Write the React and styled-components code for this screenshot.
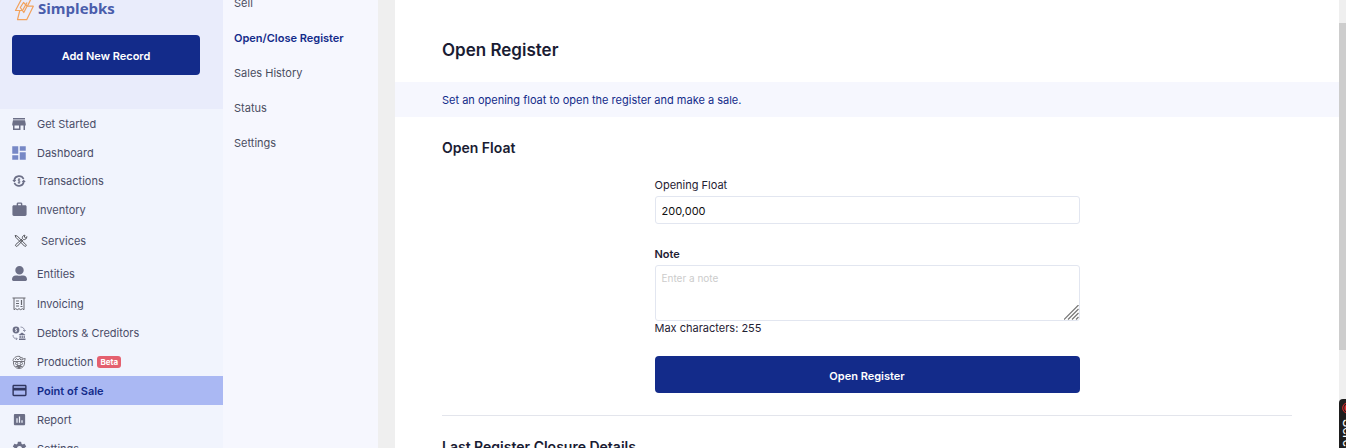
import React from "react";
import styled, { createGlobalStyle, css } from "styled-components";
import { MdStore, MdDashboard, MdWork, MdCreditCard, MdAssessment, MdSettings } from "react-icons/md";
import { FaUserAlt } from "react-icons/fa";

const GlobalStyle = createGlobalStyle`
  *, *::before, *::after { box-sizing: border-box; }
  body { margin: 0; background: #efefef; overflow: hidden; }
  body, button, input, textarea { font-family: Inter, "Liberation Sans", sans-serif; }
  h1, h2, p, ul { margin: 0; padding: 0; }
  ul { list-style: none; }
`;

const Shell = styled.div`
  position: relative;
  display: flex;
  height: 100vh;
  overflow: hidden;
  font-size: 11px;
  line-height: 16px;
  color: #3f4254;
`;

const Sidebar = styled.nav`
  flex: none;
  width: 223px;
  background: #f1f4fd;
`;

const SidebarTop = styled.div`
  height: 109px;
  padding: 0 23px 0 12px;
  background: #e9ecfb;
`;

const Brand = styled.a`
  display: flex;
  align-items: flex-start;
  gap: 4px;
  height: 35px;
  padding-left: 2px;
  color: #4a5dab;
  font: 700 15px/16px "Open Sans", "Noto Sans", sans-serif;
  text-decoration: none;
`;

const SolidButton = styled.button`
  display: block;
  width: 100%;
  height: ${(p) => p.$height}px;
  padding: 2px 6px 0;
  border: 0;
  border-radius: 4px;
  background: #132b8a;
  color: #fff;
  font-size: 11px;
  font-weight: 600;
`;

const NavLink = styled.a`
  display: flex;
  align-items: center;
  gap: 11px;
  height: ${(p) => p.$height || 29}px;
  padding-left: 12px;
  color: #4a4d68;
  text-decoration: none;
  ${(p) => p.$inset && css`gap: 13px; padding-left: 14px;`}
  ${(p) => p.$active && css`background: #aab8f3; color: #132b8a; font-weight: 600;`}
`;

const IconSlot = styled.span`
  flex: none;
  display: flex;
  align-items: center;
  justify-content: center;
  width: 14px;
  height: 16px;
  color: ${(p) => p.$color || "#6c6f87"};
  svg { flex: none; }
`;

const NavText = styled.span`
  display: flex;
  align-items: center;
  gap: 4px;
`;

const Badge = styled.span`
  padding: 0 3px;
  border-radius: 3px;
  background: #e4606f;
  color: #fff;
  font-size: 8px;
  font-weight: 700;
  line-height: 12px;
`;

const SubNav = styled.nav`
  flex: none;
  width: 155px;
  margin-right: 17px;
  background: #f6f7fe;
`;

const SubList = styled.ul`
  margin-top: -14px;
`;

const SubLink = styled.a`
  display: block;
  padding-left: 11px;
  line-height: 35px;
  color: ${(p) => (p.$active ? "#132b8a" : "#4a4d5e")};
  font-weight: ${(p) => (p.$active ? 600 : 400)};
  text-decoration: none;
`;

const Main = styled.main`
  flex: 1;
  min-width: 0;
  background: #fff;
`;

const PageTitle = styled.h1`
  padding: 38px 47px 20px;
  color: #1a1c33;
  font-size: 17px;
  font-weight: 600;
  line-height: 24px;
`;

const Notice = styled.p`
  padding: 2px 47px 0;
  background: #f6f7fe;
  color: #132b8a;
  line-height: 33px;
`;

const SectionTitle = styled.h2`
  color: #1a1c33;
  font-size: 14px;
  font-weight: 600;
  line-height: 20px;
`;

const Section = styled.section`
  margin: 0 47px;
  padding-top: 21px;
`;

const Form = styled.form`
  display: flex;
  flex-direction: column;
  width: 50%;
  margin: 0 auto;
  padding: 19px 0 22px;
`;

const Label = styled.label`
  padding-bottom: 3px;
  color: #1f2133;
  font-weight: ${(p) => (p.$strong ? 600 : 400)};
`;

const field = css`
  width: 100%;
  padding: 2px 6px 0;
  border: 1px solid #e2e6f0;
  border-radius: 3px;
  background: #fff;
  color: #111;
  font-size: 11px;
  outline: 0;
  &::placeholder { color: #ccc; opacity: 1; }
`;

const TextInput = styled.input`
  ${field}
  height: 28px;
  margin-bottom: 22px;
`;

const NoteBox = styled.div`
  position: relative;
  display: flex;
`;

const TextArea = styled.textarea`
  ${field}
  height: 56px;
  padding-top: 4px;
  font-size: 10px;
  line-height: 16px;
  resize: none;
`;

const Grip = styled.svg`
  position: absolute;
  right: 1px;
  bottom: 1px;
`;

const Hint = styled.p`
  padding-bottom: 21px;
  color: #1f2133;
  line-height: 14px;
`;

const NextSection = styled(Section)`
  border-top: 1px solid #e3e5ec;
`;

const ScrollTrack = styled.div`
  flex: none;
  width: 7px;
  padding-top: 23px;
  background: #efefef;
`;

const ScrollThumb = styled.div`
  height: 327px;
  background: #cdcdcd;
`;

const Recorder = styled.button`
  position: absolute;
  right: -17px;
  bottom: -91px;
  display: flex;
  flex-direction: column;
  align-items: flex-start;
  justify-content: flex-start;
  gap: 5px;
  width: 24px;
  height: 140px;
  padding: 3px;
  border: 0;
  border-radius: 4px 0 0 4px;
  background: #1e1e1e;
  color: #fff;
  font-size: 13px;
  line-height: 12px;
`;

const RecorderText = styled.span`
  writing-mode: vertical-rl;
  white-space: nowrap;
`;

const LogoMark = () => (
  <svg width="20" height="21" viewBox="0 0 20 21" fill="none" stroke="#f2a25c" strokeWidth="1.2" strokeLinejoin="round" aria-hidden="true">
    <path d="M7.500 -1L1.500 10.500H8.500L13 2.500" />
    <path d="M5.800 10.500L3.500 19.700H12.700L19.300 6.200H13L9.800 12.500L6.300 7.500L9.500 2.500L13.500 6.500" />
    <path d="M17 -1L13.500 6" />
  </svg>
);

const TransferIcon = () => (
  <svg width="14" height="14" viewBox="0 0 14 14" fill="none" stroke="currentColor" aria-hidden="true">
    <path d="M2.200 6A5 5 0 0 1 11.600 5M11.800 8A5 5 0 0 1 2.400 9" strokeWidth="1.700" />
    <path d="M.3 6h4L2.300 8.500zM9.700 8h4L11.700 5.500z" fill="currentColor" stroke="none" />
    <path d="M7 4v6M8.200 5.300H6.300v1.600h1.500v1.700H5.800" strokeWidth=".9" />
  </svg>
);

const ToolsIcon = () => (
  <svg width="14" height="14" viewBox="0 0 14 14" fill="none" stroke="currentColor" strokeLinecap="round" aria-hidden="true">
    <path d="M1.500 1.500l1.800.6 8.700 8.700a1 1 0 0 1-1.400 1.400L2 3.500z" strokeWidth="1" />
    <path d="M12.800 3a2.500 2.500 0 0 1-3.300 2.500L3.500 12a1 1 0 0 1-1.700-1.500L8.500 4.600A2.500 2.500 0 0 1 11 1.200L10.300 3l.8.800z" strokeWidth="1" />
  </svg>
);

const InvoiceIcon = () => (
  <svg width="14" height="14" viewBox="0 0 14 14" fill="none" stroke="currentColor" aria-hidden="true">
    <path d="M.5 1h13M2 1v11.700l1.700-1 1.600 1 1.700-1 1.700 1 1.600-1 1.700 1V1" />
    <path d="M4 4h3M4 6.500h3M4 9h3M9.500 3v5M8.500 9.500h2" strokeWidth="1.200" />
  </svg>
);

const DebtorIcon = () => (
  <svg width="14" height="14" viewBox="0 0 14 14" fill="none" stroke="currentColor" aria-hidden="true">
    <circle cx="4" cy="4" r="3.400" fill="currentColor" stroke="none" />
    <path d="M5 2.700H3.500V4h1v1.300H3" stroke="#f1f4fd" strokeWidth=".8" />
    <path d="M8.500 1c2.500 0 4 1.500 4 4M11 4l1.500 1.500L13.700 4M1 9c0 2.500 1.500 4 4 4M4 11.500L5.300 13 4 14" strokeWidth=".7" />
    <path d="M6.500 9L10 6.500 13.500 9zM7 12.500h6.500V14H7zM7.500 9.500h1.300v2.500H7.500zM9.600 9.500h1.200v2.500H9.600zM11.600 9.500h1.200v2.500h-1.200z" fill="currentColor" stroke="none" />
  </svg>
);

const ProductionIcon = () => (
  <svg width="14" height="14" viewBox="0 0 14 14" fill="none" stroke="currentColor" strokeWidth=".9" aria-hidden="true">
    <path d="M1 5.500C2 2 5 .8 8 1.500l.5 1.600 1.700-.6 1 1.500 2-.5-.7 3H1.500z" />
    <path d="M3 5l1.500-1.500L6 5l1.500-1.500L9 5l2-.5" />
    <path d="M1.500 6.500c-.5 4 2 7 5.500 7s6-3 5.500-7" />
    <circle cx="4.700" cy="8.500" r="1.200" />
    <circle cx="9.300" cy="8.500" r="1.200" />
    <path d="M3.500 11.500h7M5 10.500h4M5.500 12.500h3" />
  </svg>
);

const navItems = [
  { text: "Get Started", icon: <MdStore size={18} /> },
  { text: "Dashboard", icon: <MdDashboard size={18} />, color: "#7788c6" },
  { text: "Transactions", icon: <TransferIcon />, height: 28 },
  { text: "Inventory", icon: <MdWork size={17} /> },
  { text: "Services", icon: <ToolsIcon />, color: "#55565c", height: 33, inset: true },
  { text: "Entities", icon: <FaUserAlt size={15} />, height: 33 },
  { text: "Invoicing", icon: <InvoiceIcon />, color: "#66676e", height: 28 },
  { text: "Debtors & Creditors", icon: <DebtorIcon /> },
  { text: "Production", icon: <ProductionIcon />, color: "#66676e", badge: "Beta" },
  { text: "Point of Sale", icon: <MdCreditCard size={17} />, color: "#30365f", active: true },
  { text: "Report", icon: <MdAssessment size={15} /> },
  { text: "Settings", icon: <MdSettings size={17} /> },
];

const subItems = ["Sell", "Open/Close Register", "Sales History", "Status", "Settings"];

export default function App() {
  return (
    <>
      <GlobalStyle />
      <Shell>
        <Sidebar>
          <SidebarTop>
            <Brand href="#"><LogoMark />Simplebks</Brand>
            <SolidButton type="button" $height={40}>Add New Record</SolidButton>
          </SidebarTop>
          <ul>
            {navItems.map((n) => (
              <li key={n.text}>
                <NavLink href="#" $height={n.height} $inset={n.inset} $active={n.active}>
                  <IconSlot $color={n.color}>{n.icon}</IconSlot>
                  <NavText>{n.text}{n.badge && <Badge>{n.badge}</Badge>}</NavText>
                </NavLink>
              </li>
            ))}
          </ul>
        </Sidebar>
        <SubNav>
          <SubList>
            {subItems.map((s) => (
              <li key={s}><SubLink href="#" $active={s === "Open/Close Register"}>{s}</SubLink></li>
            ))}
          </SubList>
        </SubNav>
        <Main>
          <PageTitle>Open Register</PageTitle>
          <Notice>Set an opening float to open the register and make a sale.</Notice>
          <Section>
            <SectionTitle>Open Float</SectionTitle>
            <Form>
              <Label htmlFor="float">Opening Float</Label>
              <TextInput id="float" type="text" defaultValue="200,000" />
              <Label htmlFor="note" $strong>Note</Label>
              <NoteBox>
                <TextArea id="note" placeholder="Enter a note" maxLength={255} />
                <Grip width="15" height="15" viewBox="0 0 15 15" stroke="#777" strokeWidth="1.200" aria-hidden="true">
                  <path d="M0 14.500L14.500 0M4 14.500L14.500 4M8 14.500L14.500 8M12 14.500L14.500 12" />
                </Grip>
              </NoteBox>
              <Hint>Max characters: 255</Hint>
              <SolidButton type="button" $height={37}>Open Register</SolidButton>
            </Form>
          </Section>
          <NextSection>
            <SectionTitle>Last Register Closure Details</SectionTitle>
          </NextSection>
        </Main>
        <ScrollTrack><ScrollThumb /></ScrollTrack>
        <Recorder type="button">
          <svg width="12" height="12" viewBox="0 0 12 12" aria-hidden="true">
            <circle cx="6" cy="6" r="5.300" fill="none" stroke="#e02b2b" />
            <circle cx="6" cy="6" r="3.700" fill="#e02b2b" />
          </svg>
          <RecorderText>Screen Recorder</RecorderText>
        </Recorder>
      </Shell>
    </>
  );
}
